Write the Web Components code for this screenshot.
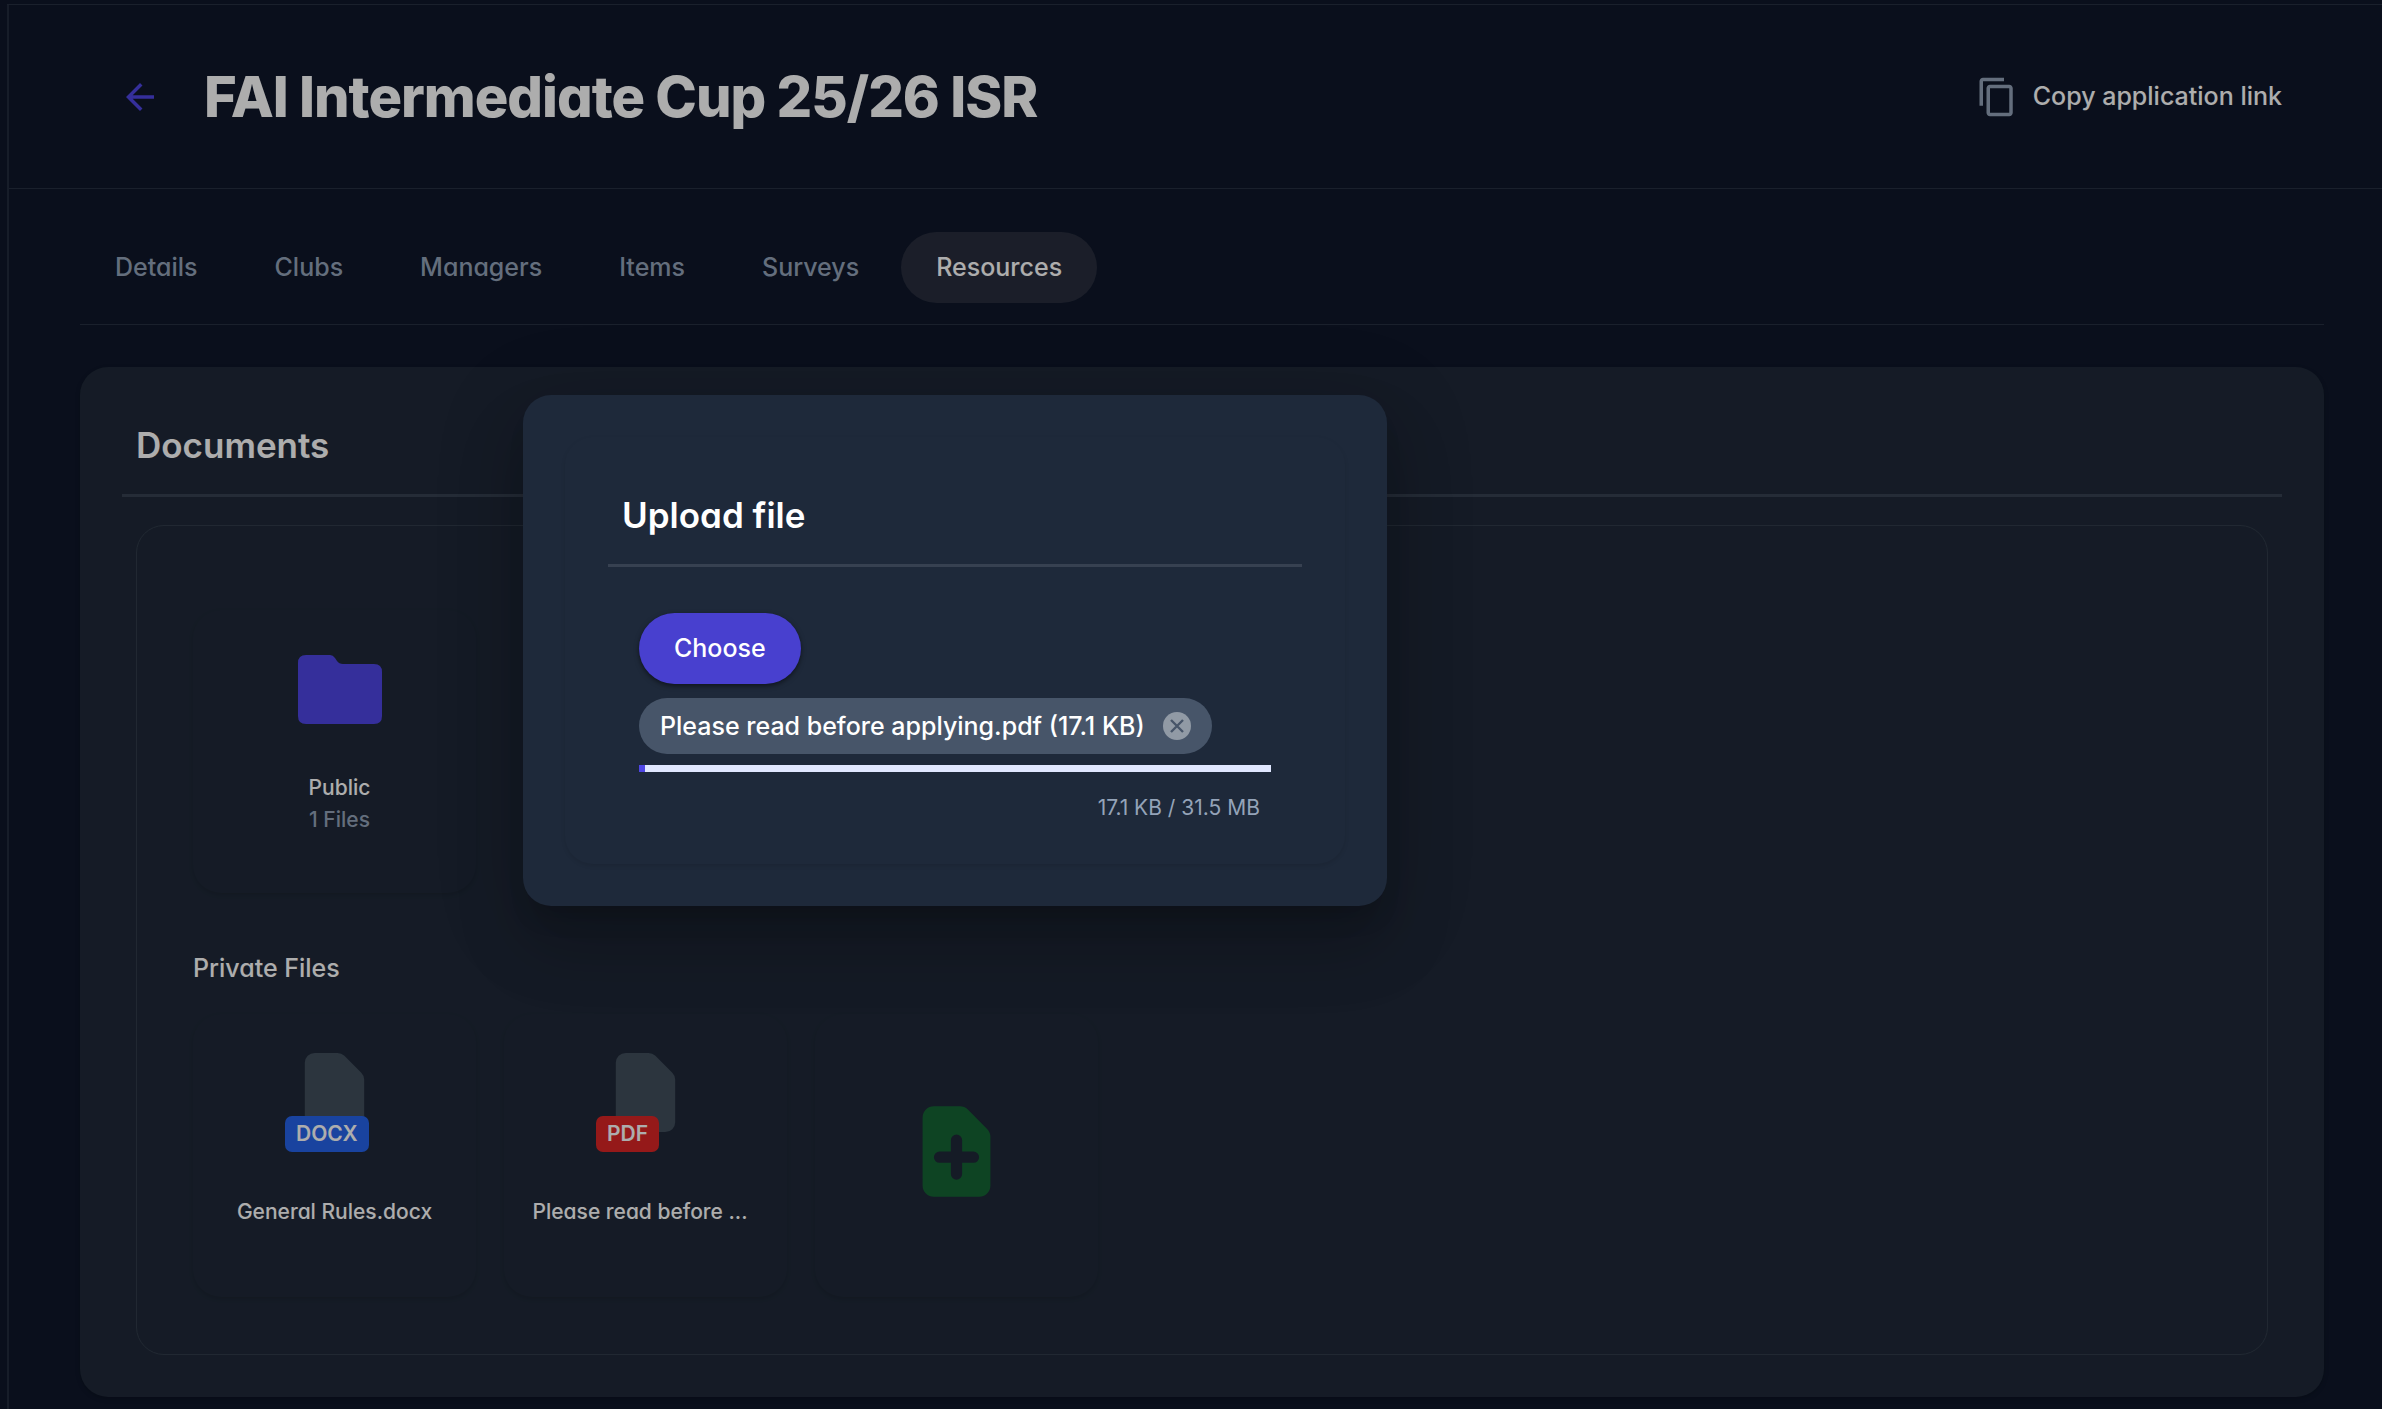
<!DOCTYPE html>
<html lang="en">
<head>
  <meta charset="utf-8">
  <meta name="viewport" content="width=device-width, initial-scale=1">
  <title>FAI Intermediate Cup 25/26 ISR</title>
  <style>
    body {
      margin: 0;
      min-height: 100vh;
      background: #0f172a;
      color: #fff;
      font-family: Inter, "Liberation Sans", sans-serif;
      font-feature-settings: "cv11";
      font-size: 25px;
      line-height: 35px;
    }
  </style>
</head>
<body>
  <app-shell>
    <page-header slot="header" heading="FAI Intermediate Cup 25/26 ISR" action="Copy application link"></page-header>
    <tab-bar items="Details,Clubs,Managers,Items,Surveys,Resources" active="Resources"></tab-bar>
    <content-card heading="Documents">
      <tile-row>
        <folder-tile name="Public" count="1 Files"></folder-tile>
      </tile-row>
      <tile-row heading="Private Files">
        <file-tile type="docx" name="General Rules.docx"></file-tile>
        <file-tile type="pdf" name="Please read before applying.pdf"></file-tile>
        <add-tile></add-tile>
      </tile-row>
    </content-card>
  </app-shell>
  <upload-dialog heading="Upload file" file="Please read before applying.pdf (17.1 KB)" total="17.1 KB / 31.5 MB"></upload-dialog>

  <script>
    class AppShell extends HTMLElement {
      constructor() {
        super();
        this.attachShadow({ mode: 'open' });
      }

      connectedCallback() {
        this.shadowRoot.innerHTML = `
          <style>
            :host {
              display: block;
              box-sizing: border-box;
              min-height: 100vh;
              padding: 5px 0 0 7px;
            }

            .frame {
              border-left: 2px solid #232b3d;
              box-shadow: 0 -1px 0 #273042;
            }

            main {
              padding: 43px 58px 12px 71px;
            }
          </style>
          <div class="frame">
            <slot name="header"></slot>
            <main><slot></slot></main>
          </div>
        `;
      }
    }

    class PageHeader extends HTMLElement {
      constructor() {
        super();
        this.attachShadow({ mode: 'open' });
      }

      connectedCallback() {
        this.shadowRoot.innerHTML = `
          <style>
            :host {
              display: flex;
              align-items: center;
              justify-content: space-between;
              box-sizing: border-box;
              height: 184px;
              padding: 0 100px 0 110px;
              border-bottom: 1px solid #273042;
            }

            .left {
              display: flex;
              align-items: center;
              gap: 43px;
            }

            a {
              display: flex;
            }

            svg {
              display: block;
              width: 42px;
              height: 42px;
            }

            h1 {
              margin: 0;
              font-size: 56px;
              line-height: 64px;
              font-weight: 800;
              letter-spacing: -1px;
            }

            button {
              display: flex;
              align-items: center;
              gap: 15px;
              padding: 0;
              border: 0;
              background: none;
              color: #fff;
              font: 500 25px/35px Inter, sans-serif;
            }
          </style>
          <div class="left">
            <a href="#" aria-label="Back">
              <svg viewBox="0 0 24 24" fill="#4f46e5"><path d="M20 11H7.83l5.59-5.59L12 4l-8 8 8 8 1.41-1.41L7.83 13H20v-2z"/></svg>
            </a>
            <h1>${this.getAttribute('heading')}</h1>
          </div>
          <button type="button">
            <svg viewBox="0 0 24 24" fill="#94a3b8"><path d="M16 1H4c-1.1 0-2 .9-2 2v14h2V3h12V1zm3 4H8c-1.1 0-2 .9-2 2v14c0 1.1.9 2 2 2h11c1.1 0 2-.9 2-2V7c0-1.1-.9-2-2-2zm0 16H8V7h11v14z"/></svg>
            ${this.getAttribute('action')}
          </button>
        `;
      }
    }

    class TabBar extends HTMLElement {
      constructor() {
        super();
        this.attachShadow({ mode: 'open' });
      }

      connectedCallback() {
        const active = this.getAttribute('active');
        const links = this.getAttribute('items').split(',').map((item) =>
          `<a href="#" ${item === active ? 'aria-current="page"' : ''}>${item}</a>`
        ).join('');

        this.shadowRoot.innerHTML = `
          <style>
            :host {
              display: block;
              padding-bottom: 21px;
              border-bottom: 1px solid #273042;
            }

            nav {
              display: flex;
              gap: 7px;
            }

            a {
              padding: 18px 35px;
              border-radius: 36px;
              color: #94a3b8;
              font-weight: 500;
              text-decoration: none;
            }

            a[aria-current] {
              background: #282d3d;
              color: #fff;
            }
          </style>
          <nav>${links}</nav>
        `;
      }
    }

    class ContentCard extends HTMLElement {
      constructor() {
        super();
        this.attachShadow({ mode: 'open' });
      }

      connectedCallback() {
        this.shadowRoot.innerHTML = `
          <style>
            :host {
              display: block;
              margin-top: 42px;
              padding: 61px 42px 42px;
              border-radius: 28px;
              background: #1f2938;
              box-shadow: 0 2px 5px rgba(0, 0, 0, 0.2);
            }

            h2 {
              margin: 0;
              padding: 0 14px 31px;
              border-bottom: 3px solid #374151;
              font-size: 35px;
              line-height: 35px;
              font-weight: 600;
            }

            .box {
              margin: 28px 14px 0;
              padding: 84px 56px 57px;
              border: 1px solid #323c4b;
              border-radius: 28px;
            }
          </style>
          <h2>${this.getAttribute('heading')}</h2>
          <div class="box"><slot></slot></div>
        `;
      }
    }

    class TileRow extends HTMLElement {
      constructor() {
        super();
        this.attachShadow({ mode: 'open' });
      }

      connectedCallback() {
        const heading = this.getAttribute('heading');

        this.shadowRoot.innerHTML = `
          <style>
            :host {
              display: block;
            }

            h3 {
              margin: 0;
              padding: 58px 0 28px;
              font-size: 25px;
              line-height: 35px;
              font-weight: 500;
            }

            .row {
              display: flex;
              flex-wrap: wrap;
              gap: 28px;
            }

            ::slotted(*) {
              box-sizing: border-box;
              width: 283px;
              height: 283px;
              border-radius: 28px;
              box-shadow: 0 2px 4px rgba(0, 0, 0, 0.12);
            }
          </style>
          ${heading ? `<h3>${heading}</h3>` : ''}
          <div class="row"><slot></slot></div>
        `;
      }
    }

    class FolderTile extends HTMLElement {
      constructor() {
        super();
        this.attachShadow({ mode: 'open' });
      }

      connectedCallback() {
        this.shadowRoot.innerHTML = `
          <style>
            :host {
              display: flex;
              flex-direction: column;
              align-items: center;
              padding: 45px 0 0 10px;
              font-size: 21px;
              line-height: 32px;
              font-weight: 500;
            }

            svg {
              width: 84px;
              height: 69px;
              margin-bottom: 48px;
            }

            .count {
              color: #94a3b8;
            }
          </style>
          <svg viewBox="0 0 84 69" fill="#4f46e5"><path d="M8 0H32Q35 0 37 3L39 6Q41 9 45 9H76Q84 9 84 17V61Q84 69 76 69H8Q0 69 0 61V8Q0 0 8 0Z"/></svg>
          <div>${this.getAttribute('name')}</div>
          <div class="count">${this.getAttribute('count')}</div>
        `;
      }
    }

    class FileTile extends HTMLElement {
      constructor() {
        super();
        this.attachShadow({ mode: 'open' });
      }

      connectedCallback() {
        const type = this.getAttribute('type');
        const name = this.getAttribute('name');
        const color = type === 'pdf' ? '#dc2626' : '#2563eb';
        const long = name.length > 20;

        this.shadowRoot.innerHTML = `
          <style>
            :host {
              display: flex;
              flex-direction: column;
              align-items: center;
              padding: 29px 28px 0;
            }

            .icon {
              position: relative;
              margin-bottom: 52px;
            }

            svg {
              display: block;
              width: 99px;
              height: 99px;
            }

            /* type label over the lower left of the sheet */
            .badge {
              position: absolute;
              left: 0;
              bottom: -10px;
              padding: 0 11px;
              border-radius: 7px;
              background: ${color};
              font-size: 21px;
              line-height: 36px;
              font-weight: 600;
            }

            .name {
              white-space: nowrap;
              font-size: 21px;
              line-height: 35px;
              font-weight: 500;
            }

            .name.long {
              width: 226px;
            }
          </style>
          <div class="icon">
            <svg viewBox="0 0 20 20" fill="#414e5c"><path d="M4 4a2 2 0 012-2h4.586A2 2 0 0112 2.586L15.414 6A2 2 0 0116 7.414V16a2 2 0 01-2 2H6a2 2 0 01-2-2V4z"/></svg>
            <span class="badge">${type.toUpperCase()}</span>
          </div>
          <div class="name ${long ? 'long' : ''}" title="${name}">${long ? name.slice(0, 19) + '...' : name}</div>
        `;
      }
    }

    class AddTile extends HTMLElement {
      constructor() {
        super();
        this.attachShadow({ mode: 'open' });
      }

      connectedCallback() {
        this.shadowRoot.innerHTML = `
          <style>
            :host {
              display: grid;
            }

            button {
              display: grid;
              place-items: center;
              padding: 0 0 8px;
              border: 0;
              background: none;
            }

            svg {
              width: 113px;
              height: 113px;
            }
          </style>
          <button type="button" aria-label="Add file">
            <svg viewBox="0 0 20 20" fill="#166534"><path fill-rule="evenodd" d="M6 2a2 2 0 00-2 2v12a2 2 0 002 2h8a2 2 0 002-2V7.414A2 2 0 0015.414 6L12 2.586A2 2 0 0010.586 2H6zm5 6a1 1 0 10-2 0v2H7a1 1 0 100 2h2v2a1 1 0 102 0v-2h2a1 1 0 100-2h-2V8z"/></svg>
          </button>
        `;
      }
    }

    class UploadDialog extends HTMLElement {
      constructor() {
        super();
        this.attachShadow({ mode: 'open' });
      }

      connectedCallback() {
        this.shadowRoot.innerHTML = `
          <style>
            :host {
              position: absolute;
              inset: 0;
              background: rgba(0, 0, 0, 0.32);
            }

            .panel {
              position: absolute;
              top: 395px;
              left: 523px;
              box-sizing: border-box;
              width: 864px;
              padding: 42px;
              border-radius: 28px;
              background: #1e293a;
              box-shadow: 0 19px 26px -12px rgba(0, 0, 0, 0.2), 0 42px 67px 5px rgba(0, 0, 0, 0.14), 0 16px 81px 14px rgba(0, 0, 0, 0.12);
            }

            .card {
              padding: 61px 43px 39px;
              border-radius: 28px;
              box-shadow: 0 2px 4px rgba(0, 0, 0, 0.1);
            }

            h2 {
              margin: 0;
              padding: 0 14px 31px;
              border-bottom: 3px solid #374151;
              font-size: 35px;
              line-height: 35px;
              font-weight: 600;
            }

            .body {
              display: flex;
              flex-direction: column;
              align-items: flex-start;
              padding: 46px 31px 0;
            }

            button {
              border: 0;
              color: #fff;
              font: 500 25px/35px Inter, sans-serif;
            }

            .choose {
              padding: 18px 35px;
              border-radius: 36px;
              background: #4840cf;
              box-shadow: 0 2px 5px rgba(0, 0, 0, 0.5);
            }

            .chip {
              display: flex;
              align-items: center;
              gap: 18px;
              margin: 14px 0 11px;
              padding: 0 21px;
              border-radius: 28px;
              background: #475569;
              font-feature-settings: normal;
              font-weight: 500;
              line-height: 56px;
            }

            .remove {
              display: flex;
              padding: 0;
              background: none;
            }

            svg {
              width: 28px;
              height: 28px;
            }

            progress {
              display: block;
              appearance: none;
              width: 100%;
              height: 7px;
              border: 0;
            }

            progress::-webkit-progress-bar {
              background: #e0e7ff;
            }

            progress::-webkit-progress-value {
              background: #4f46e5;
            }

            .total {
              align-self: flex-end;
              padding: 18px 11px 0 0;
              color: #94a3b8;
              font-size: 21px;
            }
          </style>
          <section class="panel" role="dialog" aria-labelledby="heading">
            <div class="card">
              <h2 id="heading">${this.getAttribute('heading')}</h2>
              <div class="body">
                <button class="choose" type="button">Choose</button>
                <div class="chip">
                  <span>${this.getAttribute('file')}</span>
                  <button class="remove" type="button" aria-label="Remove file">
                    <svg viewBox="0 0 28 28"><circle cx="14" cy="14" r="14" fill="#919aa5"/><path d="M8 8l12 12M20 8L8 20" stroke="#475569" stroke-width="2.4"/></svg>
                  </button>
                </div>
                <progress max="100" value="1" aria-label="Upload size"></progress>
                <div class="total">${this.getAttribute('total')}</div>
              </div>
            </div>
          </section>
        `;
      }
    }

    customElements.define('app-shell', AppShell);
    customElements.define('page-header', PageHeader);
    customElements.define('tab-bar', TabBar);
    customElements.define('content-card', ContentCard);
    customElements.define('tile-row', TileRow);
    customElements.define('folder-tile', FolderTile);
    customElements.define('file-tile', FileTile);
    customElements.define('add-tile', AddTile);
    customElements.define('upload-dialog', UploadDialog);
  </script>
</body>
</html>
